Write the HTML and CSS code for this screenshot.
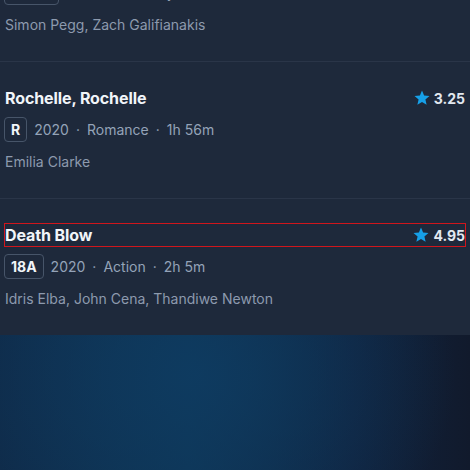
FILE: index.html
```html
<!DOCTYPE html>
<html lang="en">
<head>
<meta charset="utf-8">
<title>Movies</title>
<link rel="stylesheet" href="styles.css">
</head>
<body>
<main class="page">
  <ul class="movie-list">
    <li class="movie">
      <div class="movie-head">
        <h3 class="movie-title">Hector and the Search for Happiness</h3>
        <span class="rating"><svg class="star" viewBox="0 0 24 24"><path d="M12 17.27L18.18 21l-1.64-7.03L22 9.24l-7.19-.61L12 2 9.19 8.63 2 9.24l5.46 4.73L5.82 21z"/></svg>3.60</span>
      </div>
      <div class="meta">
        <span class="badge">PG-13</span>
        <span>2020</span><span class="dot">·</span><span>Comedy</span><span class="dot">·</span><span>1h 54m</span>
      </div>
      <p class="cast">Simon Pegg, Zach Galifianakis</p>
    </li>
    <li class="movie">
      <div class="movie-head">
        <h3 class="movie-title">Rochelle, Rochelle</h3>
        <span class="rating"><svg class="star" viewBox="0 0 24 24"><path d="M12 17.27L18.18 21l-1.64-7.03L22 9.24l-7.19-.61L12 2 9.19 8.63 2 9.240l5.46 4.73L5.82 21z"/></svg>3.25</span>
      </div>
      <div class="meta">
        <span class="badge">R</span>
        <span>2020</span><span class="dot">·</span><span>Romance</span><span class="dot">·</span><span>1h 56m</span>
      </div>
      <p class="cast">Emilia Clarke</p>
    </li>
    <li class="movie">
      <div class="movie-head is-outlined">
        <h3 class="movie-title">Death Blow</h3>
        <span class="rating"><svg class="star" viewBox="0 0 24 24"><path d="M12 17.27L18.18 21l-1.64-7.03L22 9.24l-7.19-.61L12 2 9.19 8.63 2 9.24l5.46 4.73L5.82 21z"/></svg>4.95</span>
      </div>
      <div class="meta">
        <span class="badge">18A</span>
        <span>2020</span><span class="dot">·</span><span>Action</span><span class="dot">·</span><span>2h 5m</span>
      </div>
      <p class="cast">Idris Elba, John Cena, Thandiwe Newton</p>
    </li>
  </ul>
  <section class="hero"></section>
</main>
</body>
</html>
```

FILE: styles.css
```css
* { box-sizing: border-box; }
html, body {
  margin: 0;
  padding: 0;
  background: #1e293b;
  font-family: Inter, "Noto Sans", sans-serif;
  overflow: hidden;
}
.page { margin-top: -75px; }
.movie-list {
  list-style: none;
  margin: 0;
  padding: 0;
  background: #1e293b;
}
.movie {
  padding: 24px 4px 26px 4px;
  border-bottom: 1px solid #2a3548;
}
.movie:last-child { border-bottom: none; }
.movie-head {
  display: flex;
  justify-content: space-between;
  align-items: center;
  height: 24px;
  padding-left: 1px;
}
.movie-head.is-outlined {
  outline: 1px solid #d0161c;
  outline-offset: -1px;
}
.movie-title {
  margin: 0;
  font-size: 16px;
  line-height: 24px;
  font-weight: 700;
  color: #f1f5f9;
  letter-spacing: -0.1px;
}
.rating {
  display: flex;
  align-items: center;
  gap: 3px;
  font-size: 14px;
  font-weight: 700;
  color: #e2e8f0;
  padding-right: 1px;
}
.star {
  width: 18px;
  height: 18px;
  fill: #16a0e8;
}
.meta {
  display: flex;
  align-items: center;
  margin-top: 7px;
  height: 25px;
  font-size: 14px;
  color: #94a3b8;
}
.badge {
  display: inline-flex;
  align-items: center;
  height: 25px;
  padding: 0 6px;
  border: 1px solid #475569;
  border-radius: 4px;
  color: #f1f5f9;
  font-weight: 700;
  font-size: 14px;
  margin-right: 7px;
}
.dot { margin: 0 7px; }
.cast {
  margin: 10px 0 0 0;
  padding-left: 1px;
  font-size: 14px;
  line-height: 20px;
  color: #8d9aae;
}
.hero {
  height: 300px;
  background:
    radial-gradient(ellipse 260px 220px at 195px 40px, rgba(14,60,98,0.85), rgba(14,60,98,0) 100%),
    linear-gradient(90deg, #0f2a48 0%, #0e3454 40%, #10233f 75%, #111a2c 100%);
}
```
